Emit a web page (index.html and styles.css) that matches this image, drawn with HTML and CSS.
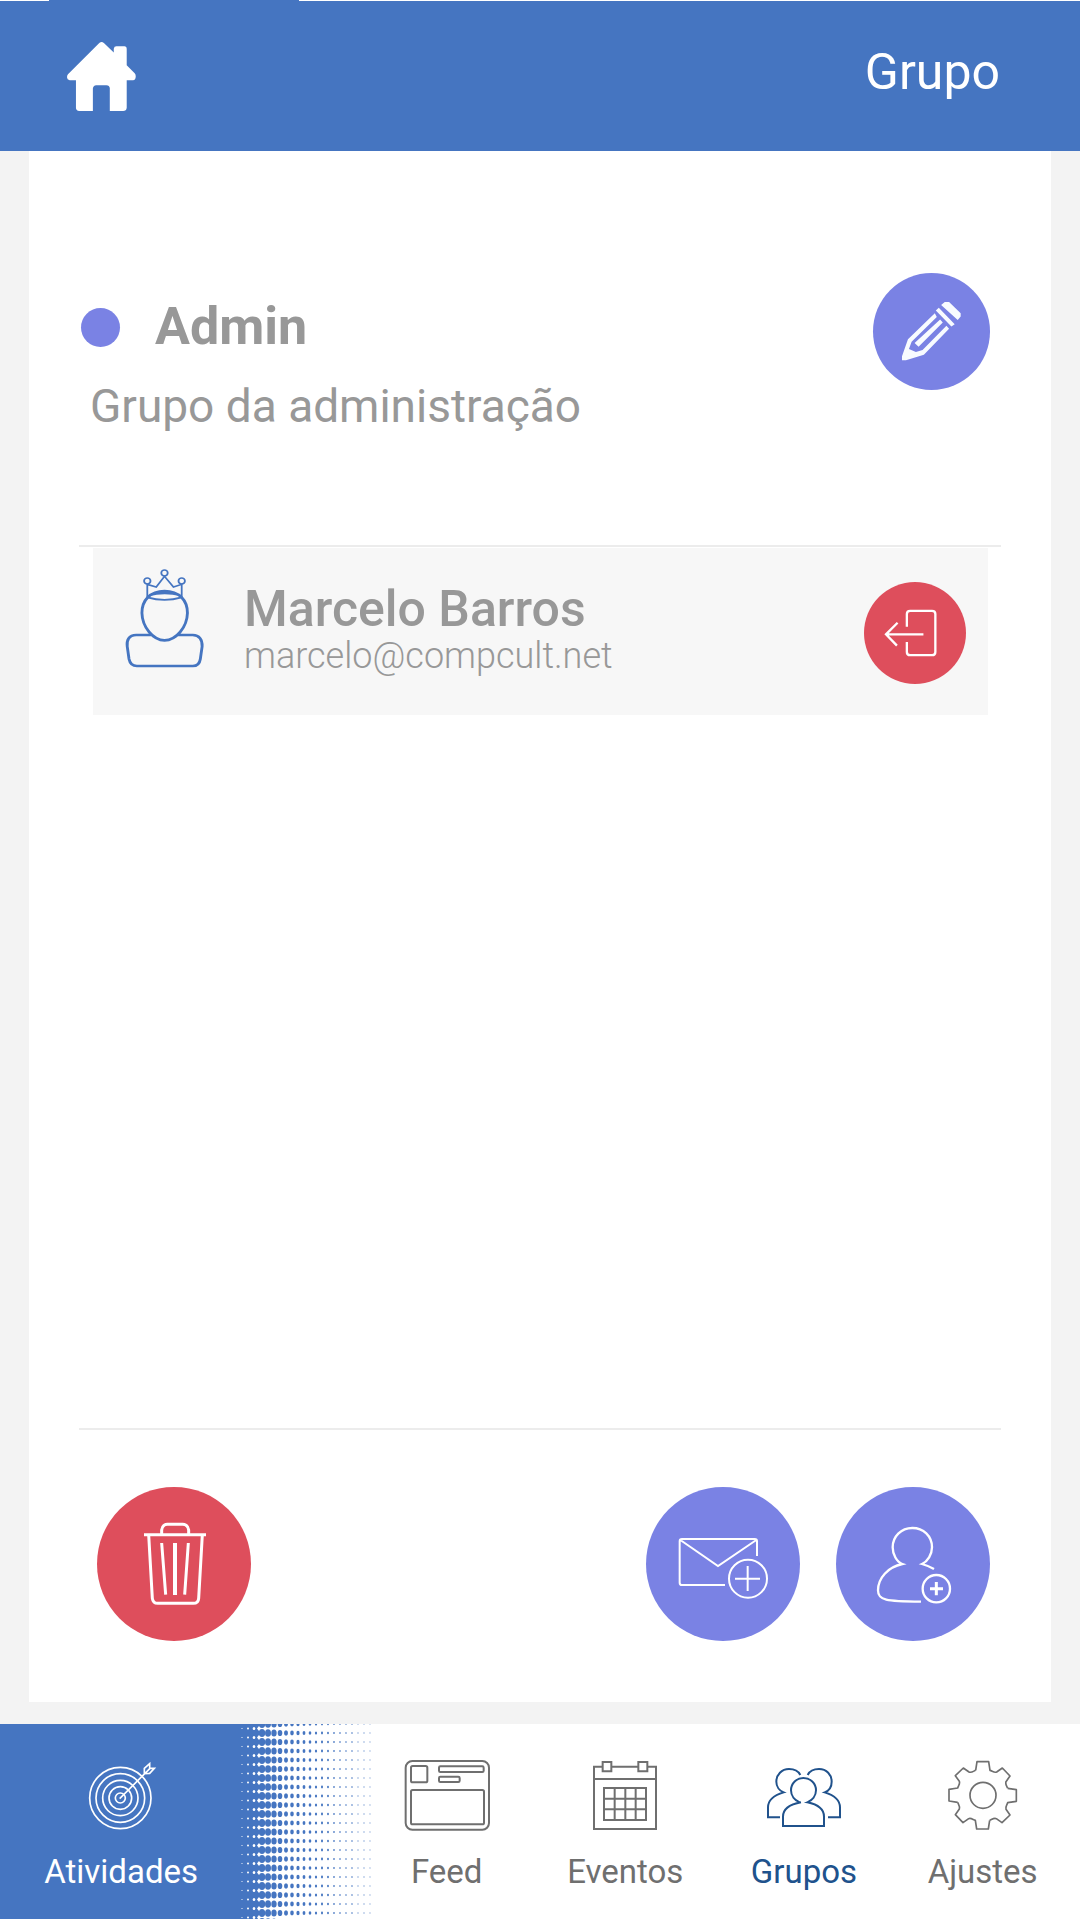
FILE: index.html
```html
<!DOCTYPE html>
<html lang="pt-BR">
<head>
<meta charset="utf-8">
<meta name="viewport" content="width=device-width, initial-scale=1">
<title>Grupo</title>
<link rel="stylesheet" href="styles.css">
</head>
<body>
<header class="topbar">
  <a class="home" href="#" aria-label="Início">
    <svg viewBox="201 125 208 208" width="69" height="69" fill="#fff"><path d="M204 222 296 130Q304 121 313 129L342 157V145Q343 138 350 138H374Q381 138 381 146V195L405 219Q409 223 408 231 407 240 400 240H381V323Q380 333 370 333H330V264Q329 255 320 255H289Q280 256 279 265V333H238Q228 332 228 323V240H209Q201 238 201 231 201 225 204 222Z"/></svg>
  </a>
  <h1 class="page-title">Grupo</h1>
</header>

<main class="card">
  <section class="group">
    <div class="group-text">
      <h2 class="group-name"><span class="dot"></span>Admin</h2>
      <p class="group-desc">Grupo da administração</p>
    </div>
    <button class="round round-edit" type="button" aria-label="Editar grupo">
      <svg viewBox="180 810 190 190" width="63" height="63" fill="#f8fbff">
        <path fill-rule="evenodd" d="M285 850 204 928 186 980V992H198L252 975 328 897 320 888 248 961 228 967 207 958 215 936 291 861Z"/>
        <path d="M301 869 309 878 236 951 224 940ZM297 833 345 883 335 890 288 842ZM304 825 315 816H328L363 850V860L354 870Z"/>
      </svg>
    </button>
  </section>

  <ul class="members">
    <li class="member">
      <svg class="avatar" viewBox="150 115 226 300" width="81" height="100" preserveAspectRatio="none" fill="none" stroke="#4575c1">
        <g stroke-width="5"><circle cx="263" cy="130" r="9"/><circle cx="215" cy="154" r="9"/><circle cx="311" cy="154" r="9"/><path d="M215 202V164L240 172 263 140 288 172 311 164V202M215 203Q263 218 311 203"/></g>
        <path stroke-width="8" d="M263 184C223 184 200 212 200 250 201 292 231 332 263 332 296 332 326 292 327 250 327 212 304 184 263 184ZM228 316H184C163 316 157 333 159 350L164 388Q168 409 186 409H342Q360 409 363 388L368 350C369 330 360 316 342 316H299"/>
        <path fill="#4575c1" stroke="none" d="M220 200Q263 168 308 200 263 188 220 200Z"/>
      </svg>
      <div class="member-text">
        <h3 class="member-name">Marcelo Barros</h3>
        <p class="member-mail">marcelo@compcult.net</p>
      </div>
      <button class="round round-leave" type="button" aria-label="Sair do grupo">
        <svg viewBox="130 235 163 150" width="54" height="50" fill="none" stroke="#fff" stroke-width="7"><path d="M199 291V253Q199 243 209 243H275Q285 243 285 253V367Q285 377 275 377H209Q199 377 199 367V337M249 314H137M171 279 136 314 169 348"/></svg>
      </button>
    </li>
  </ul>

  <section class="actions">
    <button class="round round-action danger" type="button" aria-label="Excluir grupo">
      <svg viewBox="81 231 462 462" width="154" height="154" fill="none" stroke="#fff" stroke-width="9"><path d="M222 374H408M275 373V360Q277 344 292 343H338Q354 344 356 360V373M236 374 247 565Q249 580 263 580H370Q385 580 386 565L397 374M275 399 287 554M355 399 344 554"/><path stroke-width="12" d="M315 399V555"/></svg>
    </button>
    <button class="round round-action push" type="button" aria-label="Convidar por e-mail">
      <svg viewBox="78 81 462 462" width="154" height="154" fill="none" stroke="#fff" stroke-width="6"><path d="M411 288V244Q411 237 404 237H186Q179 237 179 244V368Q179 375 186 375H315M181 240 294 318 409 240M345 356H420M383 318V393"/><circle cx="384" cy="356" r="57"/></svg>
    </button>
    <button class="round round-action" type="button" aria-label="Adicionar membro">
      <svg viewBox="648 81 462 462" width="154" height="154" fill="none" stroke="#fff" stroke-width="7"><path d="M942 327Q927 318 906 312C923 304 936 283 936 262 936 228 910 204 877 204 843 204 818 230 818 262 818 283 830 306 847 312 804 321 774 354 774 391 774 421 797 424 903 425"/><circle cx="949" cy="386" r="41"/><path stroke-width="9" d="M930 386H969M949 366V406"/></svg>
    </button>
  </section>
</main>

<nav class="tabs">
  <a class="tab tab-main" href="#">
    <svg class="halftone" aria-hidden="true">
      <defs>
        <pattern id="dots" width="400" height="9" patternUnits="userSpaceOnUse">
          <rect width="259" height="9" fill="#4575c1"/>
          <g fill="#fff"><circle cx="242" cy="4.500" r=".6"/><circle cx="248" cy="4.500" r="1"/><ellipse cx="254" cy="4.500" rx="1.300" ry="1.600"/><path d="M259 2 257 4.500 259 7Z"/></g>
          <g id="row" fill="#4575c1">
            <ellipse cx="262" rx="3.200" ry="4.100"/><ellipse cx="268" rx="3" ry="3.800"/><ellipse cx="274" rx="2.700" ry="3.500"/><ellipse cx="280" rx="2.300" ry="3.100"/><ellipse cx="286" rx="2" ry="2.700"/><ellipse cx="292" rx="1.800" ry="2.400"/><ellipse cx="298" rx="1.600" ry="2.200"/><ellipse cx="304" rx="1.400" ry="2"/><ellipse cx="310" rx="1.300" ry="1.800"/><ellipse cx="316" rx="1.100" ry="1.600"/><ellipse cx="322" rx="1" ry="1.400"/><ellipse cx="328" rx=".9" ry="1.200"/><ellipse cx="334" rx=".8" ry="1.100"/><ellipse cx="340" rx=".7" ry="1"/><ellipse cx="346" rx=".6" ry="1"/><ellipse cx="352" rx=".6" ry=".9"/><ellipse cx="358" rx=".5" ry=".8"/><ellipse cx="364" rx=".5" ry=".7"/><ellipse cx="370" rx=".4" ry=".7"/>
          </g>
          <use href="#row" y="9"/>
        </pattern>
      </defs>
      <rect width="100%" height="100%" fill="url(#dots)"/>
    </svg>
    <svg class="tab-icon" viewBox="228 165 270 240" fill="none" stroke="#fff" stroke-width="5"><circle cx="361" cy="294" r="92"/><circle cx="361" cy="294" r="73"/><circle cx="361" cy="294" r="53"/><circle cx="361" cy="294" r="34"/><circle cx="361" cy="294" r="15"/><path d="M359 296 450 205M433 221V205L449 191V205H463L449 220Z"/></svg>
    <span class="tab-label">Atividades</span>
  </a>
  <a class="tab" href="#">
    <svg class="tab-icon" viewBox="65 165 270 240" fill="none" stroke="currentColor" stroke-width="6"><rect x="76" y="183" width="250" height="206" rx="20"/><rect x="92" y="198" width="49" height="49" rx="5"/><rect x="176" y="199" width="134" height="17" rx="4"/><rect x="176" y="230" width="62" height="16" rx="4"/><rect x="92" y="270" width="219" height="103" rx="5"/></svg>
    <span class="tab-label">Feed</span>
  </a>
  <a class="tab" href="#">
    <svg class="tab-icon" viewBox="600 165 270 240" fill="none" stroke="currentColor" stroke-width="6"><path d="M668 200H642V387H828V200H802M695 200H775M642 237H828M672 264H798V360H672ZM704 264V360M736 264V360M767 264V360M672 296H798M672 328H798M668 186H694V214H668ZM775 186H802V214H775Z"/></svg>
    <span class="tab-label">Eventos</span>
  </a>
  <a class="tab tab-current" href="#" aria-current="page">
    <svg class="tab-icon" viewBox="117 165 270 240" fill="none" stroke="currentColor" stroke-width="6"><path d="M241 225C235 213 222 207 207 207 185 207 169 224 169 245 169 259 178 272 191 277 161 286 144 303 144 322V352H180M263 225C269 213 282 207 297 207 320 207 335 224 335 245 335 259 327 272 314 277 343 286 360 303 360 322V352H324M239 307C224 301 213 287 213 271 213 250 230 234 250 234 271 234 288 250 288 271 288 287 277 301 262 307 296 314 312 331 312 350V378H189V350C189 331 205 314 243 307"/></svg>
    <span class="tab-label">Grupos</span>
  </a>
  <a class="tab" href="#">
    <svg class="tab-icon" viewBox="654 165 270 240" fill="none" stroke="currentColor" stroke-width="5" stroke-linejoin="round">
      <g id="tooth"><path id="quarter" d="M767 211 771 185H806L810 211C817 213 823 219 830 216L847 204 870 228 858 245C855 253 861 259 863 265"/><use href="#quarter" transform="rotate(90 788 286)"/></g>
      <use href="#tooth" transform="rotate(180 788 286)"/><circle cx="789" cy="286" r="39"/>
    </svg>
    <span class="tab-label">Ajustes</span>
  </a>
</nav>
</body>
</html>
```
FILE: styles.css
```css
:root {
  --blue: #4575c1;
  --violet: #7a82e4;
  --red: #de4e5c;
  --grey: #989898;
  --line: #ececec;
}

* {
  box-sizing: border-box;
}

body {
  margin: 0;
  min-height: 100vh;
  display: flex;
  flex-direction: column;
  background: #f3f3f3;
  font-family: Roboto, "Liberation Sans", sans-serif;
  color: var(--grey);
}

h1,
h2,
h3,
p,
ul {
  margin: 0;
  padding: 0;
}

svg {
  display: block;
  flex: none;
}

.topbar {
  position: relative;
  display: flex;
  justify-content: space-between;
  align-items: flex-start;
  padding: 41px 80px 40px 67px;
  border-top: 1px solid #fff;
  background: var(--blue);
}

.topbar::before {
  content: "";
  position: absolute;
  top: -1px;
  left: 49px;
  width: 250px;
  height: 1px;
  background: var(--blue);
}

.page-title {
  font-size: 50px;
  line-height: 60px;
  font-weight: 400;
  color: #fff;
}

.card {
  flex: 1;
  display: flex;
  flex-direction: column;
  margin: 0 29px 22px;
  padding: 0 50px;
  background: #fff;
}

.group {
  display: flex;
  justify-content: space-between;
  align-items: flex-start;
  padding: 122px 11px 112px 0;
  border-bottom: 2px solid var(--line);
}

.group-text {
  padding-top: 24px;
}

.group-name {
  display: flex;
  align-items: center;
  gap: 35px;
  font-size: 52px;
  line-height: 60px;
  font-weight: 700;
}

.dot {
  width: 39px;
  height: 39px;
  margin-left: 2px;
  border-radius: 50%;
  background: var(--violet);
}

.group-desc {
  margin: 22px 0 0 11px;
  font-size: 46px;
  line-height: 54px;
}

.round {
  display: flex;
  flex: none;
  justify-content: center;
  align-items: center;
  padding: 0;
  border: 0;
  border-radius: 50%;
  background: var(--violet);
  cursor: pointer;
}

.round-edit {
  width: 117px;
  height: 117px;
}

.round-leave {
  width: 102px;
  height: 102px;
  margin: 14px 0 0 auto;
  padding-right: 8px;
  background: var(--red);
}

.round-action {
  width: 154px;
  height: 154px;
}

.danger {
  background: var(--red);
}

.members {
  flex: 1;
  list-style: none;
  padding: 1px 13px 0 14px;
}

.member {
  display: flex;
  align-items: flex-start;
  min-height: 167px;
  padding: 20px 22px 20px 31px;
  background: #f7f7f7;
}

.member-text {
  margin: 14px 0 0 39px;
}

.member-name {
  font-size: 50px;
  line-height: 54px;
  font-weight: 500;
}

.member-mail {
  font-size: 36px;
  line-height: 40px;
  font-weight: 300;
}

.actions {
  display: flex;
  gap: 36px;
  padding: 57px 11px 61px 18px;
  border-top: 2px solid var(--line);
}

.push {
  margin-left: auto;
}

.tabs {
  display: grid;
  grid-template-columns: 2fr 1fr 1fr 1fr 1fr;
  padding-right: 8px;
  border-bottom: 1px solid #fff;
  background: #fff;
}

.tab {
  display: flex;
  flex-direction: column;
  align-items: center;
  gap: 17px;
  padding: 31px 0 27px;
  color: #6f6f6f;
  text-decoration: none;
}

.tab-main {
  position: relative;
  padding-right: 115px;
  color: #fff;
}

.tab-current {
  color: #20528c;
}

.halftone {
  position: absolute;
  top: 0;
  left: 0;
  width: 373px;
  height: 100%;
}

.tab-icon {
  position: relative;
  width: 90px;
  height: 80px;
}

.tab-label {
  position: relative;
  font-size: 33px;
  line-height: 40px;
}
```
